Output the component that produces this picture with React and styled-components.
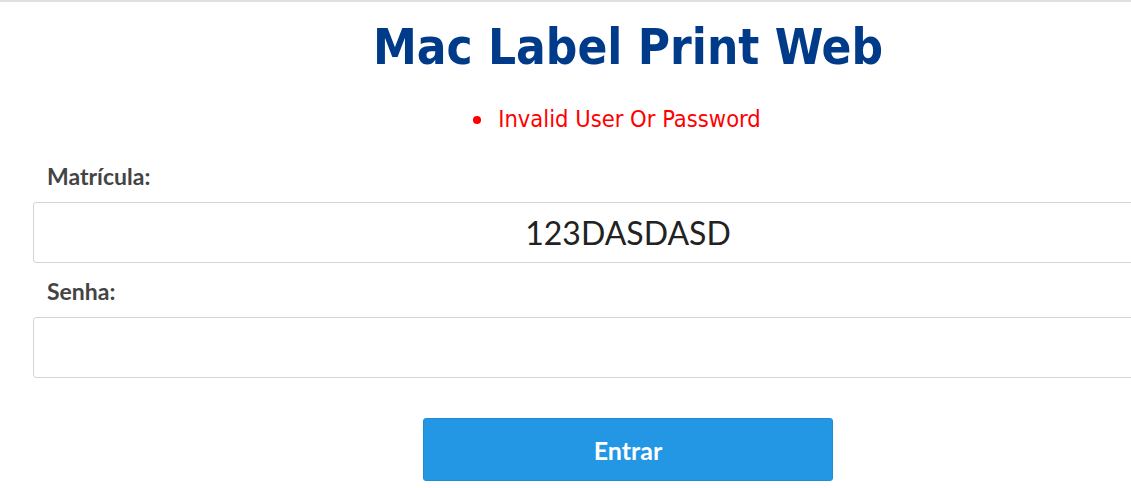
import React, { useState } from 'react';
import styled, { createGlobalStyle } from 'styled-components';

const GlobalStyle = createGlobalStyle`
  html, body {
    margin: 0;
    padding: 0;
    background: #fff;
  }
  body {
    border-top: 2px solid #e0e0e0;
    overflow: hidden;
  }
`;

const Page = styled.div`
  width: 1190px;
  margin-left: 33px;
  display: flex;
  flex-direction: column;
`;

const Title = styled.h1`
  margin: 16px 0 0;
  text-align: center;
  font-family: "DejaVu Sans Condensed", "DejaVu Sans", sans-serif;
  font-weight: bold;
  font-size: 49px;
  line-height: 60px;
  color: #003b8a;
`;

const Errors = styled.ul`
  margin: 27px 0 0;
  padding: 0;
  list-style: none;
  text-align: center;
`;

const ErrorItem = styled.li`
  font-family: "DejaVu Sans Condensed", "DejaVu Sans", sans-serif;
  font-size: 23.5px;
  line-height: 28px;
  color: #ff0000;
  margin-left: -22px;

  &::before {
    content: "";
    display: inline-block;
    width: 8px;
    height: 8px;
    border-radius: 50%;
    background: #ff0000;
    margin-right: 17px;
    vertical-align: middle;
    position: relative;
    top: -1px;
  }
`;

const Label = styled.label`
  display: block;
  margin: ${p => p.$top}px 0 0 14px;
  font-family: Lato, "Liberation Sans", sans-serif;
  font-weight: bold;
  font-size: 23px;
  line-height: 26px;
  color: #444;
`;

const Input = styled.input`
  box-sizing: border-box;
  display: block;
  width: 100%;
  height: 61px;
  margin-top: 13px;
  padding: 0 12px;
  border: 1px solid #d4d4d4;
  border-radius: 3px;
  font-family: Lato, "Liberation Sans", sans-serif;
  font-size: 32px;
  color: #222;
  text-align: center;
  outline: none;
  background: #fff;
`;

const Button = styled.button`
  align-self: center;
  width: 410px;
  height: 63px;
  margin-top: 40px;
  border: 1px solid #1f8bd6;
  border-radius: 3px;
  background: #2397e4;
  color: #fff;
  font-family: Lato, "Liberation Sans", sans-serif;
  font-weight: bold;
  font-size: 25px;
  cursor: pointer;
`;

export default function App() {
  const [user, setUser] = useState('123DASDASD');
  const [pass, setPass] = useState('');

  return (
    <>
      <GlobalStyle />
      <Page>
        <Title>Mac Label Print Web</Title>
        <Errors>
          <ErrorItem>Invalid User Or Password</ErrorItem>
        </Errors>
        <Label $top={30} htmlFor="matricula">Matrícula:</Label>
        <Input id="matricula" value={user} onChange={e => setUser(e.target.value)} />
        <Label $top={15} htmlFor="senha">Senha:</Label>
        <Input id="senha" type="password" value={pass} onChange={e => setPass(e.target.value)} />
        <Button type="button">Entrar</Button>
      </Page>
    </>
  );
}
